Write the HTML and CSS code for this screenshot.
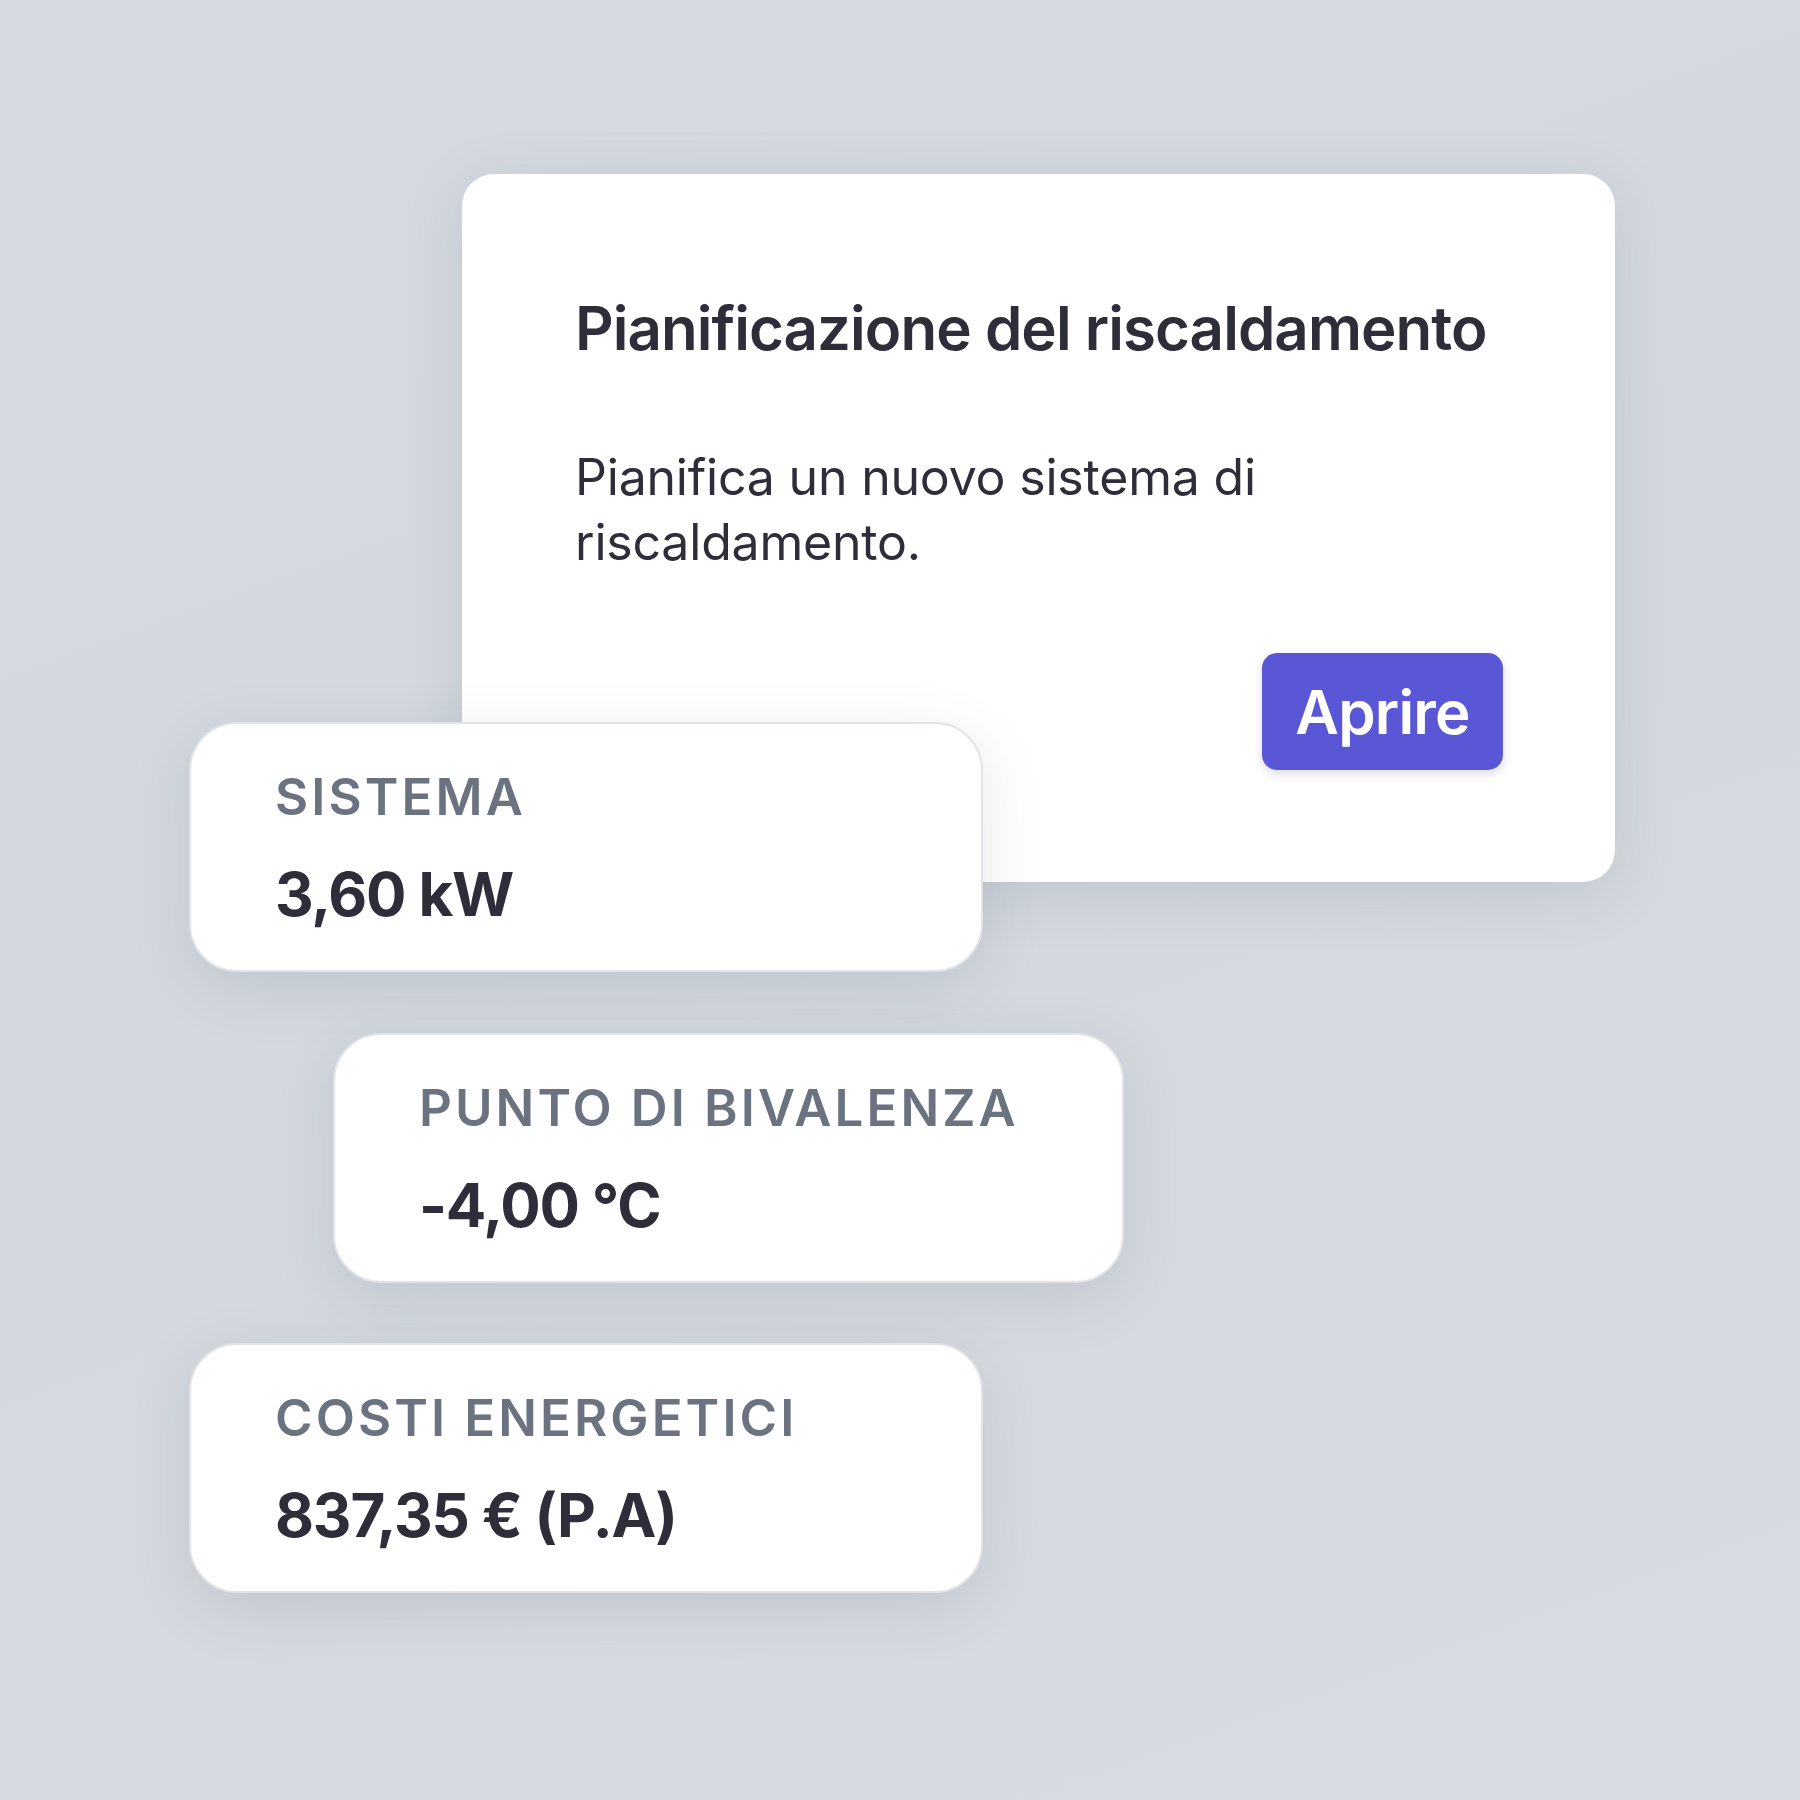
FILE: index.html
```html
<!DOCTYPE html>
<html lang="it">
<head>
<meta charset="utf-8">
<title>Pianificazione del riscaldamento</title>
<link rel="stylesheet" href="styles.css">
</head>
<body>
<main class="canvas">
  <section class="plan-card">
    <h1 class="plan-title">Pianificazione del riscaldamento</h1>
    <p class="plan-desc">Pianifica un nuovo sistema di riscaldamento.</p>
    <div class="plan-actions">
      <button class="btn-open" type="button">Aprire</button>
    </div>
  </section>

  <div class="stat stat-1">
    <div class="stat-label">SISTEMA</div>
    <div class="stat-value">3,60 kW</div>
  </div>

  <div class="stat stat-2">
    <div class="stat-label">PUNTO DI BIVALENZA</div>
    <div class="stat-value">-4,00 °C</div>
  </div>

  <div class="stat stat-3">
    <div class="stat-label">COSTI ENERGETICI</div>
    <div class="stat-value">837,35 € (P.A)</div>
  </div>
</main>
</body>
</html>
```

FILE: styles.css
```css
* { box-sizing: border-box; }

html, body {
  margin: 0;
  padding: 0;
}

body {
  width: 1800px;
  height: 1800px;
  background: linear-gradient(160deg, #d5dae0 0%, #d4d9e0 50%, #d7dce2 100%);
  font-family: Inter, "Noto Sans", "Liberation Sans", sans-serif;
  color: #2e2e3a;
  overflow: hidden;
}

.canvas {
  display: flex;
  flex-direction: column;
  align-items: flex-start;
  padding-top: 174px;
}

.plan-card {
  margin-left: 462px;
  width: 1153px;
  height: 708px;
  background: #ffffff;
  border-radius: 32px;
  padding: 118px 112px 0 113px;
  box-shadow: 0 12px 60px rgba(70, 85, 95, 0.14);
  display: flex;
  flex-direction: column;
}

.plan-title {
  margin: 0;
  font-size: 60px;
  font-weight: 600;
  line-height: normal;
  letter-spacing: -0.95px;
  white-space: nowrap;
  color: #2e2e3a;
}

.plan-desc {
  margin: 81px 0 0 0;
  max-width: 760px;
  font-size: 50px;
  font-weight: 400;
  line-height: 65px;
  letter-spacing: -0.2px;
  color: #2e2e3a;
}

.plan-actions {
  display: flex;
  justify-content: flex-end;
  margin-top: 78px;
}

.btn-open {
  font-family: Inter, "Noto Sans", "Liberation Sans", sans-serif;
  font-size: 60px;
  font-weight: 600;
  line-height: normal;
  letter-spacing: -0.8px;
  color: #ffffff;
  background: #5957d6;
  border: none;
  border-radius: 15px;
  width: 241px;
  height: 117px;
  padding: 0;
  box-shadow: 0 4px 10px rgba(60, 60, 120, 0.18);
}

.stat {
  position: relative;
  width: 794px;
  height: 250px;
  background: #ffffff;
  border-radius: 48px;
  border: 2px solid #e1e3e6;
  padding: 42px 0 0 84px;
  box-shadow: 0 16px 60px rgba(70, 85, 95, 0.14);
}

.stat-1 {
  margin-top: -160px;
  margin-left: 189px;
}

.stat-2 {
  width: 791px;
  margin-top: 61px;
  margin-left: 333px;
}

.stat-3 {
  margin-top: 60px;
  margin-left: 189px;
}

.stat-label {
  font-size: 51px;
  font-weight: 600;
  line-height: normal;
  letter-spacing: 3.1px;
  color: #6b7280;
}

.stat-value {
  margin-top: 31px;
  font-size: 60px;
  font-weight: 700;
  line-height: normal;
  letter-spacing: -1.2px;
  color: #2e2e3a;
}
```
